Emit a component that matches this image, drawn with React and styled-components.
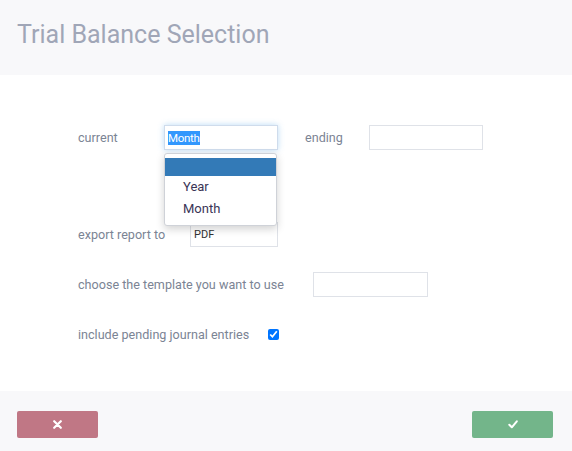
import React from "react"
import styled, { createGlobalStyle } from "styled-components"

const GlobalStyle = createGlobalStyle`
  html, body {
    margin: 0;
    padding: 0;
    background: #ffffff;
    font-family: Roboto, "Liberation Sans", sans-serif;
  }
`

function CrossIcon() {
  return (
    <svg width="9" height="9" viewBox="0 0 9 9">
      <path d="M1.2 1.2 L7.8 7.8 M7.8 1.2 L1.2 7.8" stroke="#fff" strokeWidth="2.2" strokeLinecap="round" />
    </svg>
  )
}

function CheckIcon() {
  return (
    <svg width="10" height="9" viewBox="0 0 10 9">
      <path d="M1.3 4.8 L3.8 7.3 L8.8 1.3" stroke="#fff" strokeWidth="2" fill="none" strokeLinecap="round" strokeLinejoin="round" />
    </svg>
  )
}

function App() {
  return (
    <Page>
      <GlobalStyle />
      <Header>
        <Title>Trial Balance Selection</Title>
      </Header>
      <Body>
        <Row $top={50}>
          <Label $width={86}>current</Label>
          <FieldWrap>
            <Field $width={114} $focused>
              <Selected>Month</Selected>
            </Field>
            <Dropdown>
              <Option $active />
              <Option>Year</Option>
              <Option>Month</Option>
            </Dropdown>
          </FieldWrap>
          <Label $gap={27} $width={64}>ending</Label>
          <Field $width={114} />
        </Row>
        <Row $top={72}>
          <Label $width={112}>export report to</Label>
          <Field $width={88}>PDF</Field>
        </Row>
        <Row $top={25}>
          <Label $width={235}>choose the template you want to use</Label>
          <Field $width={115} />
        </Row>
        <Row $top={25}>
          <Label $width={190}>include pending journal entries</Label>
          <Check type="checkbox" checked readOnly />
        </Row>
      </Body>
      <Footer>
        <ActionButton $color="#c07785"><CrossIcon /></ActionButton>
        <ActionButton $color="#73b58a"><CheckIcon /></ActionButton>
      </Footer>
    </Page>
  )
}

const Page = styled.div`
  width: 572px;
  height: 451px;
  display: flex;
  flex-direction: column;
  background: #ffffff;
`

const Header = styled.div`
  height: 75px;
  background: #f8f8fa;
  display: flex;
  align-items: center;
  padding-left: 17px;
  box-sizing: border-box;
`

const Title = styled.h1`
  margin: 0 0 6px 0;
  font-size: 25px;
  font-weight: 400;
  color: #a0a6b7;
  letter-spacing: 0;
`

const Body = styled.div`
  flex: 1;
  padding-left: 78px;
`

const Row = styled.div`
  display: flex;
  align-items: center;
  height: 25px;
  margin-top: ${(p) => p.$top}px;
`

const Label = styled.div`
  width: ${(p) => p.$width}px;
  margin-left: ${(p) => p.$gap || 0}px;
  flex-shrink: 0;
  font-size: 12.6px;
  color: #7b8494;
  white-space: nowrap;
`

const FieldWrap = styled.div`
  position: relative;
`

const Field = styled.div`
  width: ${(p) => p.$width}px;
  height: 25px;
  box-sizing: border-box;
  border: 1px solid ${(p) => (p.$focused ? "#cfdcec" : "#dfe2e8")};
  box-shadow: ${(p) => (p.$focused ? "0 0 6px rgba(102, 175, 233, 0.45)" : "none")};
  background: #ffffff;
  display: flex;
  align-items: center;
  padding-left: 3px;
  font-size: 11px;
  color: #333;
`

const Selected = styled.span`
  background: #3297fd;
  color: #ffffff;
  line-height: 14px;
  font-size: 11.5px;
  letter-spacing: -0.3px;
`

const Dropdown = styled.div`
  position: absolute;
  top: 28px;
  left: 0;
  width: 113px;
  box-sizing: border-box;
  padding: 4px 0 5px;
  background: #ffffff;
  border: 1px solid #cfd2d8;
  border-radius: 3px;
  box-shadow: 0 3px 8px rgba(0, 0, 0, 0.18);
  z-index: 2;
`

const Option = styled.div`
  height: ${(p) => (p.$active ? 18 : 22)}px;
  line-height: 22px;
  padding-left: 18px;
  font-size: 13px;
  color: #3a3556;
  background: ${(p) => (p.$active ? "#337ab7" : "transparent")};
`

const Check = styled.input`
  margin: 0;
  width: 11px;
  height: 11px;
`

const Footer = styled.div`
  height: 60px;
  background: #f8f8fa;
  display: flex;
  justify-content: space-between;
  align-items: flex-start;
  padding: 20px 19px 0 17px;
  box-sizing: border-box;
`

const ActionButton = styled.button`
  width: 81px;
  height: 27px;
  border: none;
  border-radius: 2px;
  background: ${(p) => p.$color};
  display: flex;
  align-items: center;
  justify-content: center;
  padding: 0;
`

export default App
